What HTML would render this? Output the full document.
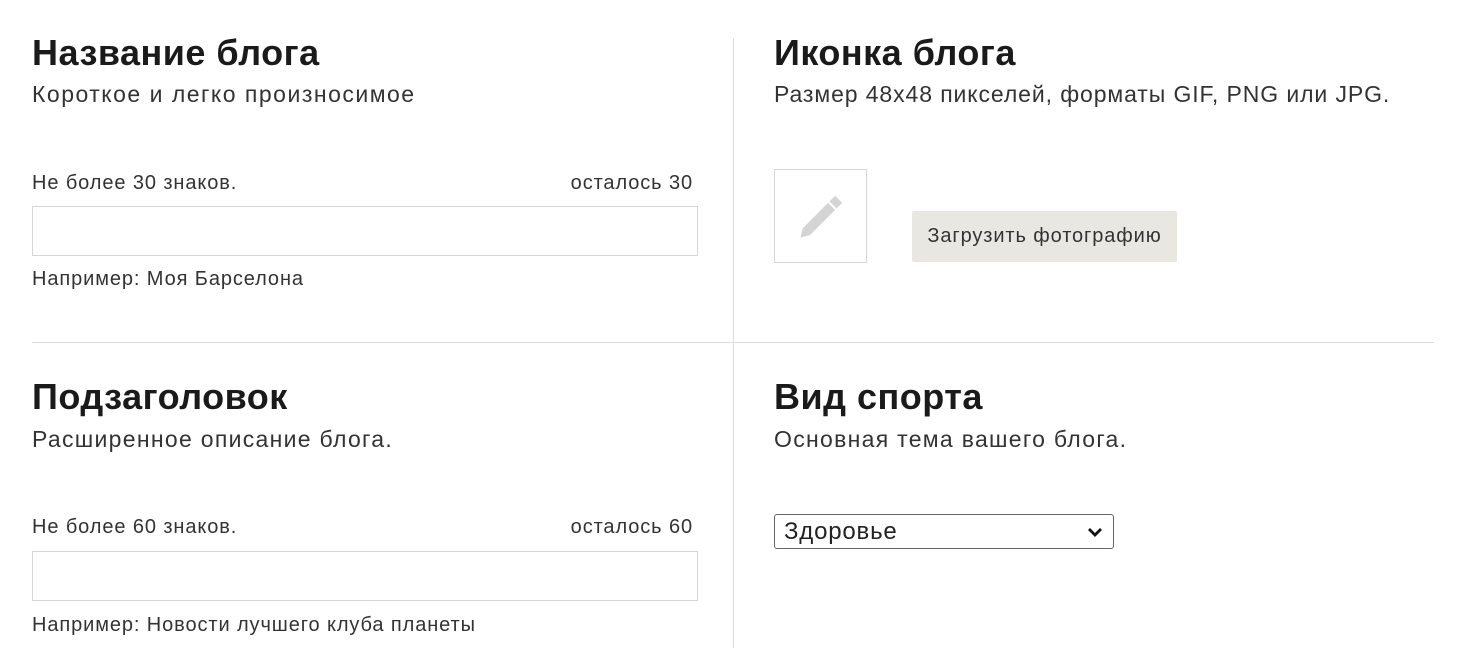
<!DOCTYPE html>
<html><head><meta charset="utf-8"><style>
body{margin:0;width:1460px;height:668px;background:#fff;position:relative;overflow:hidden;font-family:"Liberation Sans",sans-serif;color:#222}
.a{position:absolute;white-space:nowrap}
h2{position:absolute;margin:0;font-size:36px;letter-spacing:0.5px;font-weight:bold;color:#1a1a1a;line-height:1;white-space:nowrap}
.sub{font-size:23px;letter-spacing:1.5px;color:#333;line-height:1}
.sm{font-size:20px;letter-spacing:0.9px;color:#333;line-height:1}
.inp{position:absolute;border:1px solid #d6d6d6;background:#fff;box-sizing:border-box}
.r{text-align:right;width:300px}
</style></head><body>
<div class="a" style="left:733px;top:38px;width:1px;height:610px;background:#ddd"></div>
<div class="a" style="left:32px;top:342px;width:1402px;height:1px;background:#ddd"></div>

<h2 style="left:32px;top:35px">Название блога</h2>
<div class="a sub" style="left:32px;top:83px">Короткое и легко произносимое</div>
<div class="a sm" style="left:32px;top:173px">Не более 30 знаков.</div>
<div class="a sm r" style="left:393px;top:173px">осталось 30</div>
<div class="inp" style="left:32px;top:206px;width:666px;height:50px"></div>
<div class="a sm" style="left:32px;top:269px">Например: Моя Барселона</div>

<h2 style="left:32px;top:379px">Подзаголовок</h2>
<div class="a sub" style="left:32px;top:428px;letter-spacing:1.3px">Расширенное описание блога.</div>
<div class="a sm" style="left:32px;top:517px">Не более 60 знаков.</div>
<div class="a sm r" style="left:393px;top:517px">осталось 60</div>
<div class="inp" style="left:32px;top:551px;width:666px;height:50px"></div>
<div class="a sm" style="left:32px;top:615px">Например: Новости лучшего клуба планеты</div>

<h2 style="left:774px;top:35px">Иконка блога</h2>
<div class="a sub" style="left:774px;top:83px;letter-spacing:0.9px">Размер 48x48 пикселей, форматы GIF, PNG или JPG.</div>
<div class="inp" style="left:774px;top:169px;width:93px;height:94px">
<svg width="93" height="94" style="position:absolute;left:-1px;top:-1px"><g transform="rotate(-45 47 48)"><rect x="26" y="43" width="36" height="10" fill="#d4d4d4"/><rect x="64" y="43" width="8" height="10" fill="#d4d4d4"/><polygon points="26,43 26,53 18,48" fill="#d4d4d4"/></g></svg>
</div>
<div class="a" style="left:912px;top:211px;width:265px;height:51px;background:#e9e7e2;border-radius:2px;font-size:20px;letter-spacing:0.9px;line-height:51px;text-align:center;color:#333">Загрузить фотографию</div>

<h2 style="left:774px;top:379px">Вид спорта</h2>
<div class="a sub" style="left:774px;top:428px;letter-spacing:1.3px">Основная тема вашего блога.</div>
<div class="a" style="left:774px;top:514px;width:340px;height:35px;border:1px solid #666;border-radius:3px;box-sizing:border-box;font-size:24px;letter-spacing:0.8px;line-height:34px;padding-left:9px;color:#222">Здоровье
<svg width="16" height="10" style="position:absolute;right:10px;top:12px"><path d="M2 2 L8 8 L14 2" stroke="#111" stroke-width="2.8" fill="none"/></svg></div>
</body></html>
